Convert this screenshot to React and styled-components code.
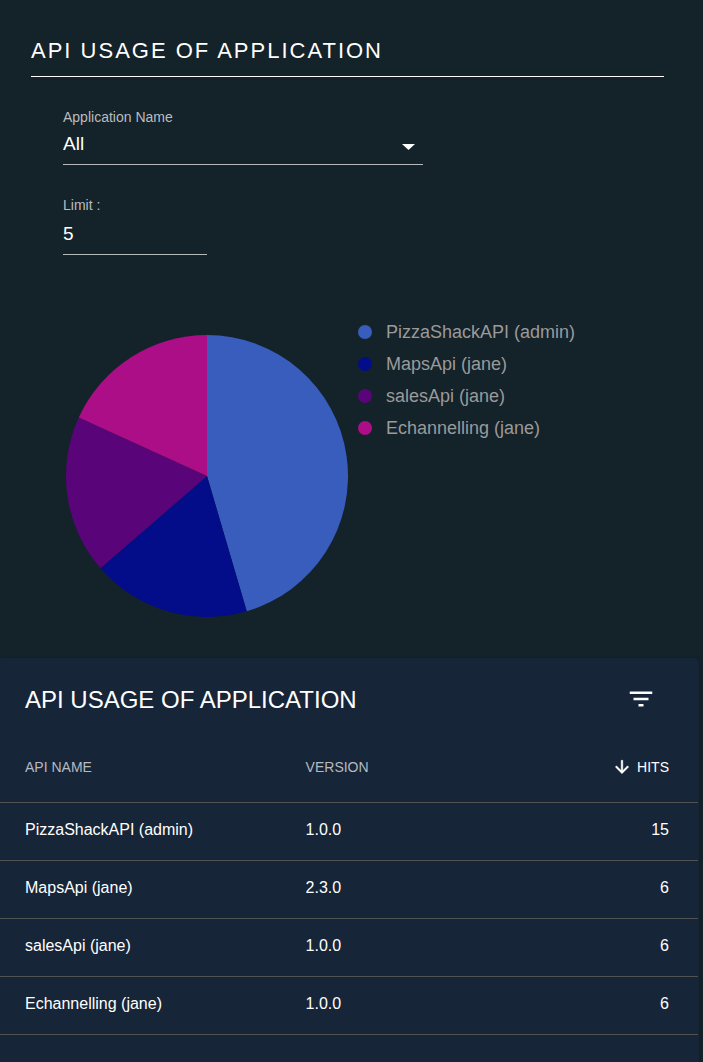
import React, { useState } from "react";
import styled, { createGlobalStyle } from "styled-components";

const GlobalStyle = createGlobalStyle`
  *, *::before, *::after { box-sizing: border-box; }
  body {
    margin: 0;
    background: #14222a;
    color: #fff;
    font-family: "Liberation Sans", Arial, sans-serif;
  }
`;

const Page = styled.main`
  display: flex;
  flex-direction: column;
  min-height: 100vh;
`;

const Widget = styled.section`
  padding: 37px 39px 41px 31px;
`;

const Heading = styled.h1`
  margin: 0;
  padding-bottom: 11px;
  border-bottom: 1px solid #fff;
  font-size: 22px;
  font-weight: 400;
  line-height: 28px;
  letter-spacing: 2px;
`;

const Form = styled.form`
  display: flex;
  flex-direction: column;
  gap: 32px;
  padding: 32px 32px 0;
`;

const Field = styled.div`
  display: flex;
  flex-direction: column;
  width: ${(p) => p.$width}px;
  max-width: 100%;
`;

const Label = styled.label`
  font-size: 14px;
  line-height: 16px;
  color: #b9bdbf;
`;

const SelectBox = styled.div`
  position: relative;
  display: flex;
`;

const Select = styled.select`
  appearance: none;
  width: 100%;
  height: 40px;
  padding: 0 32px 2px 0;
  border: 0;
  border-bottom: 1px solid #b5b9bb;
  border-radius: 0;
  outline: none;
  background: transparent;
  color: #fff;
  font: inherit;
  font-size: 19px;
`;

const Caret = styled.svg`
  position: absolute;
  right: 8px;
  top: 19px;
  width: 13px;
  height: 6px;
  fill: #fff;
  pointer-events: none;
`;

const Input = styled.input`
  width: 100%;
  height: 42px;
  padding: 0;
  border: 0;
  border-bottom: 1px solid #b5b9bb;
  border-radius: 0;
  outline: none;
  background: transparent;
  color: #fff;
  font: inherit;
  font-size: 19px;
`;

const Chart = styled.div`
  display: flex;
  align-items: flex-start;
  gap: 10px;
  padding: 61px 0 0 35px;
`;

const PieSvg = styled.svg`
  flex: none;
  width: 282px;
  height: 282px;
  margin-top: 19px;
`;

const Legend = styled.ul`
  margin: 0;
  padding: 0;
  list-style: none;
`;

const LegendItem = styled.li`
  display: flex;
  align-items: center;
  gap: 14px;
  font-size: 18px;
  line-height: 32px;
  color: #9a9a9a;
`;

const Dot = styled.span`
  width: 14px;
  height: 14px;
  border-radius: 50%;
  background: ${(p) => p.$color};
`;

const Card = styled.section`
  flex: 1;
  margin-right: 4px;
  padding: 0 1px 27px 0;
  border-radius: 0 5px 0 0;
  background: #172538;
  box-shadow: 0 1px 4px rgba(0, 0, 0, 0.2);
`;

const Toolbar = styled.header`
  display: flex;
  align-items: flex-start;
  justify-content: space-between;
  padding: 26px 42px 16px 25px;
`;

const CardTitle = styled.h2`
  margin: 0;
  font-size: 24px;
  font-weight: 400;
  line-height: 32px;
`;

const IconButton = styled.button`
  display: flex;
  padding: 0;
  border: 0;
  background: transparent;
  color: #fff;
  cursor: pointer;
`;

const Icon = styled.svg`
  width: ${(p) => p.$size}px;
  height: ${(p) => p.$size}px;
  fill: currentColor;
`;

const Table = styled.table`
  width: 100%;
  table-layout: fixed;
  border-collapse: separate;
  border-spacing: 0;
`;

const HeadCell = styled.th`
  width: ${(p) => p.$width};
  height: 71px;
  padding: 0 29px 0 25px;
  border-bottom: 1px solid #515151;
  font-size: 14px;
  font-weight: 400;
  text-align: ${(p) => (p.$end ? "right" : "left")};
  color: #b5bac0;
`;

const SortButton = styled.button`
  display: inline-flex;
  align-items: center;
  gap: 5px;
  padding: 0;
  border: 0;
  background: transparent;
  color: #fff;
  font: inherit;
  cursor: pointer;
  vertical-align: middle;
`;

const Cell = styled.td`
  height: 58px;
  padding: 0 29px 4px 25px;
  border-bottom: 1px solid #515151;
  font-size: 16px;
  text-align: ${(p) => (p.$end ? "right" : "left")};
`;

const USAGE = [
  { name: "PizzaShackAPI (admin)", version: "1.0.0", hits: 15, color: "#385dbd" },
  { name: "MapsApi (jane)", version: "2.3.0", hits: 6, color: "#030d8a" },
  { name: "salesApi (jane)", version: "1.0.0", hits: 6, color: "#590579" },
  { name: "Echannelling (jane)", version: "1.0.0", hits: 6, color: "#ab0e86" },
];

function Pie({ data }) {
  const total = data.reduce((sum, d) => sum + d.hits, 0);
  const point = (share) => {
    const angle = share * 2 * Math.PI;
    return `${141 + 141 * Math.sin(angle)} ${141 - 141 * Math.cos(angle)}`;
  };
  let used = 0;
  return (
    <PieSvg viewBox="0 0 282 282" role="img" aria-label="Hits by API">
      {data.map((d) => {
        const from = used / total;
        used += d.hits;
        const to = used / total;
        const large = to - from > 0.5 ? 1 : 0;
        return (
          <path
            key={d.name}
            fill={d.color}
            d={`M141 141L${point(from)}A141 141 0 ${large} 1 ${point(to)}Z`}
          />
        );
      })}
    </PieSvg>
  );
}

export default function App() {
  const [limit, setLimit] = useState("5");
  const [descending, setDescending] = useState(true);
  const rows = descending ? USAGE : [...USAGE].reverse();

  return (
    <>
      <GlobalStyle />
      <Page>
        <Widget>
          <Heading>API USAGE OF APPLICATION</Heading>
          <Form>
            <Field $width={360}>
              <Label htmlFor="application">Application Name</Label>
              <SelectBox>
                <Select id="application" defaultValue="All">
                  <option>All</option>
                </Select>
                <Caret viewBox="0 0 13 6" aria-hidden="true">
                  <path d="M0 0h13L6.500 6z" />
                </Caret>
              </SelectBox>
            </Field>
            <Field $width={144}>
              <Label htmlFor="limit">Limit :</Label>
              <Input
                id="limit"
                inputMode="numeric"
                value={limit}
                onChange={(e) => setLimit(e.target.value)}
              />
            </Field>
          </Form>
          <Chart>
            <Pie data={USAGE} />
            <Legend>
              {USAGE.map((d) => (
                <LegendItem key={d.name}>
                  <Dot $color={d.color} />
                  {d.name}
                </LegendItem>
              ))}
            </Legend>
          </Chart>
        </Widget>
        <Card>
          <Toolbar>
            <CardTitle>API USAGE OF APPLICATION</CardTitle>
            <IconButton type="button" aria-label="Filter list">
              <Icon $size={30} viewBox="0 0 24 24" aria-hidden="true">
                <path d="M10 18h4v-2h-4v2zM3 6v2h18V6H3zm3 7h12v-2H6v2z" />
              </Icon>
            </IconButton>
          </Toolbar>
          <Table>
            <thead>
              <tr>
                <HeadCell $width="40.2%" scope="col">API NAME</HeadCell>
                <HeadCell scope="col">VERSION</HeadCell>
                <HeadCell $end scope="col" aria-sort={descending ? "descending" : "ascending"}>
                  <SortButton type="button" onClick={() => setDescending(!descending)}>
                    <Icon $size={20} viewBox="0 0 24 24" aria-hidden="true">
                      <path
                        stroke="currentColor"
                        strokeWidth="0.5"
                        d="M20 12l-1.410-1.410L13 16.170V4h-2v12.170l-5.580-5.590L4 12l8 8 8-8z"
                      />
                    </Icon>
                    HITS
                  </SortButton>
                </HeadCell>
              </tr>
            </thead>
            <tbody>
              {rows.map((d) => (
                <tr key={d.name}>
                  <Cell>{d.name}</Cell>
                  <Cell>{d.version}</Cell>
                  <Cell $end>{d.hits}</Cell>
                </tr>
              ))}
            </tbody>
          </Table>
        </Card>
      </Page>
    </>
  );
}
